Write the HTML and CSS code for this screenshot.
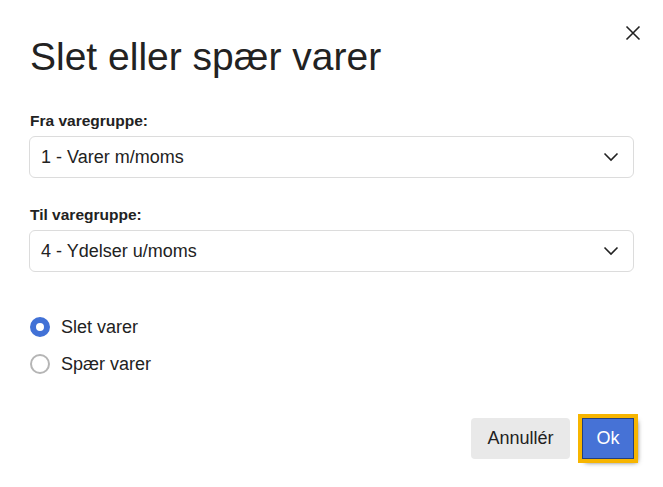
FILE: index.html
```html
<!DOCTYPE html>
<html lang="da">
<head>
<meta charset="utf-8">
<link rel="stylesheet" href="styles.css">
</head>
<body>
<div class="dialog">
  <button class="close" aria-label="Luk">
    <svg width="16" height="16" viewBox="0 0 16 16"><path d="M1.5 1.5 L14.5 14.5 M14.5 1.5 L1.5 14.5" stroke="#222" stroke-width="1.6" fill="none"/></svg>
  </button>
  <h1 class="title">Slet eller spær varer</h1>
  <div class="field">
    <label class="label">Fra varegruppe:</label>
    <div class="select"><span>1 - Varer m/moms</span>
      <svg class="chev" width="16" height="10" viewBox="0 0 16 10"><path d="M1.5 1.5 L8 8 L14.5 1.5" stroke="#222" stroke-width="1.6" fill="none"/></svg>
    </div>
  </div>
  <div class="field field2">
    <label class="label">Til varegruppe:</label>
    <div class="select"><span>4 - Ydelser u/moms</span>
      <svg class="chev" width="16" height="10" viewBox="0 0 16 10"><path d="M1.5 1.5 L8 8 L14.5 1.5" stroke="#222" stroke-width="1.6" fill="none"/></svg>
    </div>
  </div>
  <div class="radios">
    <div class="radio"><span class="dot on"></span><span>Slet varer</span></div>
    <div class="radio"><span class="dot"></span><span>Spær varer</span></div>
  </div>
  <div class="actions">
    <button class="btn cancel">Annullér</button>
    <button class="btn ok">Ok</button>
  </div>
</div>
</body>
</html>
```
FILE: styles.css
```css
* { box-sizing: border-box; }
html, body { margin: 0; padding: 0; background: #fff; }
body { font-family: "Liberation Sans", Arial, sans-serif; color: #222; }
.dialog { position: relative; width: 663px; height: 487px; padding: 36px 29px 0 29px; display: flex; flex-direction: column; }
.close { position: absolute; top: 24px; right: 21px; width: 18px; height: 18px; padding: 0; border: 0; background: none; display: flex; align-items: center; justify-content: center; }
.title { margin: 0 0 0 1px; font-weight: 400; font-size: 39px; line-height: 42px; color: #222; }
.field { margin-top: 34px; display: flex; flex-direction: column; }
.field2 { margin-top: 28px; }
.label { font-size: 15.5px; font-weight: 700; line-height: 18px; margin: 0 0 6px 1px; color: #222; }
.select { height: 42px; border: 1px solid #dcdcdc; border-radius: 6px; display: flex; align-items: center; justify-content: space-between; padding: 0 14px 0 11px; font-size: 18px; color: #222; }
.radios { margin-top: 45px; display: flex; flex-direction: column; gap: 17px; padding-left: 1px; }
.radio { display: flex; align-items: center; gap: 11px; font-size: 18px; height: 20px; }
.dot { width: 20px; height: 20px; border-radius: 50%; border: 2px solid #b5b5b5; background: #fff; }
.dot.on { border: 6px solid #4171d6; }
.actions { margin-top: 44px; display: flex; justify-content: flex-end; align-items: center; gap: 12px; }
.btn { font-family: inherit; font-size: 18px; height: 41px; border-radius: 4px; border: 0; }
.cancel { width: 99px; background: #e9e9e9; color: #222; }
.ok { width: 52px; background: #4672d6; color: #fff; border: 1px solid #24407f; border-radius: 0; outline: 4px solid #f7b500; box-shadow: 3px 3px 5px rgba(0,0,0,0.75); }
```
